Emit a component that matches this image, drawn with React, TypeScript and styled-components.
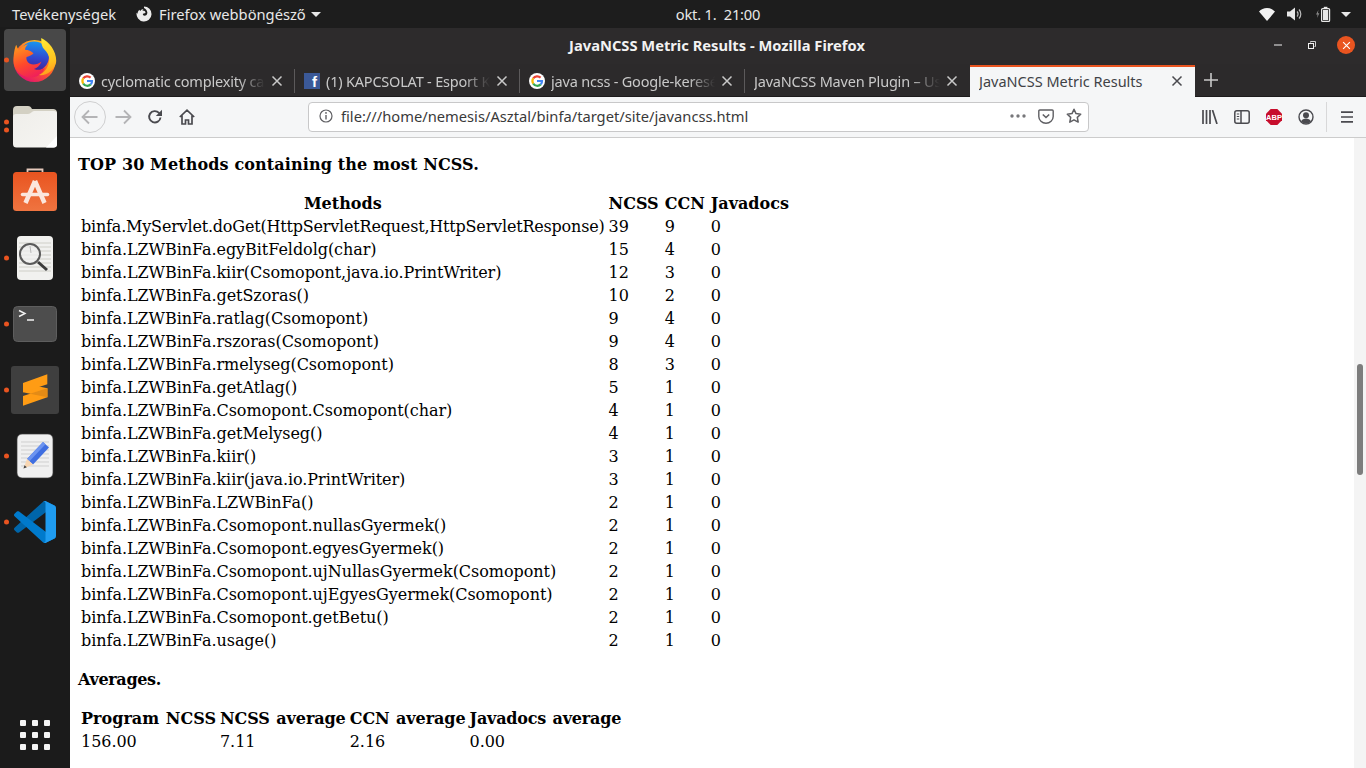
import React from "react";
import styled, { createGlobalStyle } from "styled-components";

const uiFont = `"Noto Sans", "Open Sans", sans-serif`;

const GlobalStyle = createGlobalStyle`
  html, body {
    margin: 0;
    padding: 0;
    height: 100%;
    overflow: hidden;
    background: #1b1b1b;
  }
`;

const Desktop = styled.div`
  width: 1366px;
  height: 768px;
  display: grid;
  grid-template-rows: 28px 1fr;
  grid-template-columns: 70px 1fr;
  overflow: hidden;
  font-family: ${uiFont};
`;

const TopBar = styled.header`
  grid-column: 1 / 3;
  display: grid;
  grid-template-columns: 1fr auto 1fr;
  align-items: center;
  background: #1d1d1d;
  color: #e8e8e8;
  font-size: 14.7px;
`;

const TopLeft = styled.div`
  display: flex;
  align-items: center;
  padding-left: 12px;
`;

const AppMenu = styled.div`
  display: flex;
  align-items: center;
  gap: 7px;
  margin-left: 20px;
`;

const Clock = styled.div`
  white-space: pre;
  margin-left: 70px;
  letter-spacing: -0.2px;
`;

const TopRight = styled.div`
  display: flex;
  align-items: center;
  justify-content: flex-end;
  padding-right: 11px;
`;

const Tray = styled.span<{ $w: number }>`
  display: flex;
  justify-content: center;
  width: ${(p) => p.$w}px;
`;

const Caret = styled.span<{ $nudge?: number }>`
  display: inline-block;
  width: 0;
  height: 0;
  margin-left: ${(p) => p.$nudge ?? 0}px;
  border-left: 5px solid transparent;
  border-right: 5px solid transparent;
  border-top: 5px solid #e8e8e8;
`;

const Dock = styled.nav`
  display: flex;
  flex-direction: column;
  margin-top: -1px;
  background: #1b1b1b;
  padding-bottom: 10px;
`;

const DockItem = styled.div<{ $active?: boolean; $lift?: number }>`
  position: relative;
  height: 66px;
  flex: none;
  box-sizing: border-box;
  padding-bottom: ${(p) => p.$lift ?? 0}px;
  display: flex;
  align-items: center;
  justify-content: center;

  &::before {
    content: "";
    display: ${(p) => (p.$active ? "block" : "none")};
    position: absolute;
    left: 4px;
    right: 4px;
    top: 2px;
    bottom: 2px;
    border-radius: 4px;
    background: #484848;
  }

  svg {
    position: relative;
  }
`;

const DockDots = styled.span`
  position: absolute;
  left: 4px;
  top: 50%;
  transform: translateY(-50%);
  display: flex;
  flex-direction: column;
  gap: 3px;
`;

const Dot = styled.i`
  display: block;
  width: 5px;
  height: 5px;
  border-radius: 50%;
  background: #e95420;
`;

const AppsGrid = styled.div`
  margin: auto 0 8px 20px;
  display: grid;
  grid-template-columns: repeat(3, 6px);
  gap: 6px;
`;

const AppsDot = styled.i`
  display: block;
  width: 6px;
  height: 6px;
  border-radius: 1px;
  background: #f4f4f4;
`;

const Browser = styled.main`
  display: flex;
  flex-direction: column;
  min-width: 0;
  min-height: 0;
`;

const TitleBar = styled.div`
  height: 36px;
  flex: none;
  box-sizing: border-box;
  display: flex;
  align-items: center;
  justify-content: center;
  position: relative;
  background: #2d2b2c;
  color: #f2f2f2;
  font-size: 14.7px;
  font-weight: 700;
  padding: 0 2px 2px 0;
`;

const WindowButtons = styled.div`
  position: absolute;
  right: 11px;
  top: 8px;
  display: flex;
  align-items: center;
  gap: 16px;
`;

const WinBtn = styled.span`
  width: 18px;
  height: 18px;
  display: flex;
  align-items: center;
  justify-content: center;
`;

const CloseBtn = styled(WinBtn)`
  border-radius: 50%;
  background: #e95420;
`;

const TabStrip = styled.div`
  height: 33px;
  flex: none;
  box-sizing: border-box;
  display: flex;
  align-items: stretch;
  background: #2c2a2b;
  border-bottom: 1px solid #1d1b1c;
`;

const Tab = styled.div<{ $active?: boolean; $sep?: boolean }>`
  width: 225px;
  flex: none;
  box-sizing: border-box;
  display: flex;
  align-items: center;
  padding: 0 12px 2px 9px;
  margin: 1px 0 -1px;
  font-size: 14.5px;
  color: ${(p) => (p.$active ? "#3f4246" : "#c9c9c9")};
  background: ${(p) => (p.$active ? "#f5f6f7" : "transparent")};
  border-top: 2px solid ${(p) => (p.$active ? "#e95420" : "transparent")};
  position: relative;

  &::after {
    content: "";
    display: ${(p) => (p.$sep ? "block" : "none")};
    position: absolute;
    right: 0;
    top: 2px;
    bottom: 4px;
    width: 1px;
    background: #5c5a5b;
  }
`;

const TabIcon = styled.span`
  width: 16px;
  height: 16px;
  flex: none;
  margin-right: 6px;
  display: flex;
`;

const FacebookMark = styled.span`
  width: 16px;
  height: 16px;
  background: #3b5998;
  color: #fff;
  font: 700 15px/16px "Liberation Sans", sans-serif;
  text-align: right;
  padding: 1px 3px 0 0;
  box-sizing: border-box;
`;

const TabTitle = styled.span<{ $fade?: boolean }>`
  flex: 1;
  min-width: 0;
  overflow: hidden;
  white-space: nowrap;
  letter-spacing: ${(p) => (p.$fade ? "-0.2px" : "0")};
  mask-image: ${(p) =>
    p.$fade ? "linear-gradient(to right, #000 84%, transparent 100%)" : "none"};
`;

const TabClose = styled.span`
  flex: none;
  width: 12px;
  height: 12px;
  margin-left: 6px;
  display: flex;
`;

const NewTab = styled.span`
  width: 32px;
  display: flex;
  align-items: center;
  justify-content: center;
`;

const NavBar = styled.div`
  height: 41px;
  flex: none;
  box-sizing: border-box;
  display: flex;
  align-items: center;
  background: #f5f6f7;
  border-bottom: 1px solid #cccccc;
  padding: 0 0 1px 4px;
`;

const BackButton = styled.span`
  width: 32px;
  height: 32px;
  box-sizing: border-box;
  flex: none;
  border: 1px solid #cfcfd0;
  border-radius: 50%;
  display: flex;
  align-items: center;
  justify-content: center;
`;

const NavButton = styled.span<{ $w: number }>`
  width: ${(p) => p.$w}px;
  flex: none;
  display: flex;
  align-items: center;
  justify-content: center;
`;

const UrlBar = styled.div`
  width: 781px;
  height: 30px;
  flex: none;
  margin-left: 104px;
  box-sizing: border-box;
  display: flex;
  align-items: center;
  background: #fff;
  border: 1px solid #c8c8c9;
  border-radius: 4px;
  padding: 0 1px 1px 10px;
  font-size: 14.7px;
  color: #3a3a3a;
`;

const UrlText = styled.span`
  flex: 1;
  margin-left: 8px;
  white-space: nowrap;
`;

const UrlAction = styled.span<{ $w: number }>`
  width: ${(p) => p.$w}px;
  display: flex;
  justify-content: center;
`;

const NavRight = styled.div`
  display: flex;
  align-items: center;
  margin-left: 105px;
`;

const NavDivider = styled.span`
  width: 1px;
  height: 30px;
  background: #d8d8d9;
  margin: 0 4px 0 4px;
`;

const PageArea = styled.div`
  flex: 1;
  min-height: 0;
  display: flex;
  background: #fff;
`;

const PageBody = styled.div`
  flex: 1;
  min-width: 0;
  padding: 17px 8px 0;
  color: #000;
  font-family: "DejaVu Serif", serif;
  font-size: 16px;
`;

const SectionTitle = styled.h3<{ $spacing: number }>`
  margin: 0 0 17px;
  font-size: 16px;
  font-weight: 700;
  letter-spacing: ${(p) => p.$spacing}px;
`;

const MetricTable = styled.table`
  margin-bottom: 17px;
  border-spacing: 2px;

  th, td {
    padding: 1px;
    white-space: nowrap;
  }

  td {
    text-align: left;
    letter-spacing: -0.05px;
  }
`;

const MethodsTable = styled(MetricTable)`
  th:nth-child(2), th:nth-child(3) {
    padding-right: 3px;
  }

  tbody tr:first-child td:first-child {
    letter-spacing: -0.19px;
  }
`;

const AveragesTable = styled(MetricTable)`
  th {
    word-spacing: 1px;
    letter-spacing: -0.08px;
  }

  th:first-child {
    letter-spacing: 0.02px;
  }

  th:last-child {
    letter-spacing: -0.2px;
  }
`;

const ScrollTrack = styled.div`
  width: 12px;
  flex: none;
  background: #f4f4f4;
  display: flex;
  justify-content: center;
`;

const ScrollThumb = styled.div`
  width: 6px;
  height: 111px;
  margin-top: 226px;
  border-radius: 3px;
  background: #7d7d7d;
`;

const GoogleIcon = () => (
  <svg width="16" height="16" viewBox="0 0 16 16">
    <circle cx="8" cy="8" r="8" fill="#fff" />
    <g fill="none" strokeWidth="2.2">
      <path d="M11.6 4.6A5 5 0 0 0 4.2 5.4" stroke="#ea4335" />
      <path d="M4.2 5.4a5 5 0 0 0 0 5.2" stroke="#fbbc05" />
      <path d="M4.2 10.6a5 5 0 0 0 7.6.8" stroke="#34a853" />
      <path d="M11.8 11.4A5 5 0 0 0 13 8H8" stroke="#4285f4" />
    </g>
  </svg>
);

const CrossIcon = ({ color, size = 12 }: { color: string; size?: number }) => (
  <svg width={size} height={size} viewBox="0 0 12 12">
    <path d="M1.5 1.5l9 9M10.5 1.5l-9 9" stroke={color} strokeWidth="1.5" fill="none" />
  </svg>
);

const FirefoxMini = () => (
  <svg width="16" height="16" viewBox="0 0 16 16">
    <path
      d="M8 .5a7.5 7.5 0 1 1-7.4 6.3c.3.5.6.8 1 1 0-1.8.7-3 2-4 0 .6.2 1 .6 1.3C5.2 3.5 6.5 2.8 7.6 3 6.8 3.5 6.5 4 6.5 4.5c1.8.2 3 .8 3 2 0 .7-1.5 1-2.5 1.3-.4.9.2 2 1.5 2 1.8 0 3-1.5 2.8-3.5-.2-2-1.6-3.6-3.3-4.3V.5z"
      fill="#ececec"
    />
  </svg>
);

const WifiIcon = () => (
  <svg width="16" height="13" viewBox="0 0 16 13">
    <path d="M8 13L0 3.6C2 1.4 4.8 0 8 0s6 1.4 8 3.6z" fill="#f2f2f2" />
  </svg>
);

const SpeakerIcon = () => (
  <svg width="16" height="14" viewBox="0 0 16 14">
    <path d="M0 4.5h3L8 .5v13l-5-4H0z" fill="#e8e8e8" />
    <path d="M10 4.5a3.5 3.5 0 0 1 0 5M12 2.5a6.5 6.5 0 0 1 0 9" stroke="#bdbdbd" strokeWidth="1.2" fill="none" />
  </svg>
);

const BatteryIcon = () => (
  <svg width="16" height="16" viewBox="0 0 16 16">
    <path d="M3.4 4L1 8.5h1.6L2 12l2.4-4.8H2.9z" fill="#8a8a8a" />
    <rect x="6.6" y="2.6" width="8" height="12.8" rx="1" fill="none" stroke="#e8e8e8" strokeWidth="1.2" />
    <rect x="8.8" y=".8" width="3.6" height="1.6" fill="#e8e8e8" />
    <rect x="8" y="4" width="5.2" height="10" fill="#e8e8e8" />
  </svg>
);

const FirefoxLogo = () => (
  <svg width="44" height="44" viewBox="0 0 44 44">
    <defs>
      <linearGradient id="foxRing" x1="0.8" y1="0.2" x2="0.3" y2="1">
        <stop offset="0" stopColor="#ffb21f" />
        <stop offset="0.5" stopColor="#ff5a2a" />
        <stop offset="1" stopColor="#e3126f" />
      </linearGradient>
      <linearGradient id="foxGlobe" x1="0.6" y1="0" x2="0.5" y2="1">
        <stop offset="0" stopColor="#1796f0" />
        <stop offset="0.55" stopColor="#3347cf" />
        <stop offset="1" stopColor="#45218f" />
      </linearGradient>
      <linearGradient id="foxHead" x1="0.2" y1="0" x2="0.6" y2="1">
        <stop offset="0" stopColor="#ff9a1c" />
        <stop offset="0.55" stopColor="#ff4a2a" />
        <stop offset="1" stopColor="#f0205a" />
      </linearGradient>
      <linearGradient id="foxTail" x1="0.3" y1="0" x2="0.5" y2="1">
        <stop offset="0" stopColor="#ffe933" />
        <stop offset="0.7" stopColor="#ffc21f" />
        <stop offset="1" stopColor="#ff9a1f" />
      </linearGradient>
    </defs>
    <circle cx="21.5" cy="23" r="21" fill="url(#foxRing)" />
    <circle cx="21" cy="18.5" r="15" fill="url(#foxGlobe)" />
    <path
      d="M3.3 6.7c.5 2.3 1.5 4 2.7 5.3C8.5 9 11.5 7 15 6.2 13 8 12 10 12 11.7c3 0 7 1.3 8.5 3.8-2 2-5 3-7 3.5-.5 2 .5 5 3 6.5 3.5 2 8.5 1 12-2-1.5 4-4.500 6.500-7.500 7.500 4 1.500 8 1 11-1.500-2.500 6.500-8 10.500-15 10C8 38.500 0 32 .5 22c.2-6 1-12 2.8-15.3z"
      fill="url(#foxHead)"
    />
    <path
      d="M28.3 0C28 5 29 9 31 11c4 4 6 8 5 13-1 6-5 11-10 13 7 1 15-4 17-12C44.5 15 37 4 28.3 0z"
      fill="url(#foxTail)"
    />
  </svg>
);

const FilesLogo = () => (
  <svg width="46" height="44" viewBox="0 0 46 44">
    <defs>
      <linearGradient id="folderFace" x1="0" y1="0" x2="1" y2="1">
        <stop offset="0" stopColor="#efeeea" />
        <stop offset="1" stopColor="#f6f5f2" />
      </linearGradient>
    </defs>
    <path d="M1 6a4 4 0 0 1 4-4h11c2 0 3 1 4 3h21a4 4 0 0 1 4 3v8H1z" fill="#d3d0c3" />
    <path d="M1 13a3 3 0 0 1 3-3h12c3 0 4-3 6-3h20a3 3 0 0 1 3 3v30a3.5 3.5 0 0 1-3.5 3.5h-37A3.5 3.5 0 0 1 1 40z" fill="url(#folderFace)" />
    <path d="M45 32v8a3.5 3.5 0 0 1-3.5 3.5H34z" fill="#fff" />
  </svg>
);

const StoreLogo = () => (
  <svg width="46" height="44" viewBox="0 0 46 44">
    <defs>
      <linearGradient id="storeBag" x1="0.5" y1="0" x2="0.5" y2="1">
        <stop offset="0" stopColor="#e95420" />
        <stop offset="1" stopColor="#ef7440" />
      </linearGradient>
    </defs>
    <path d="M15.5 5V1.5h15V5" fill="none" stroke="#e6c9bb" strokeWidth="1.8" />
    <rect x="1" y="4" width="44" height="39" rx="3.5" fill="url(#storeBag)" />
    <g stroke="#fbe6dc" fill="none">
      <path d="M23 13L13.5 35M23 13l9.5 22" strokeWidth="4.5" />
      <path d="M10.5 26.5h25" strokeWidth="3.5" strokeLinecap="round" />
    </g>
  </svg>
);

const SearchLogo = () => (
  <svg width="38" height="46" viewBox="0 0 38 46">
    <rect x="1" y="1" width="36" height="44" rx="4" fill="#f1f1ef" />
    <g stroke="#cfcfc8" strokeWidth="1">
      {[8, 12, 16, 20, 24, 28, 32, 36].map((y) => (
        <path key={y} d={`M3 ${y}h32`} />
      ))}
    </g>
    <circle cx="14" cy="19" r="10" fill="#efefef" fillOpacity=".7" stroke="#5a5a5a" strokeWidth="2" />
    <path d="M14 11l1 7" stroke="#b9b9b9" strokeWidth="1" />
    <path d="M22 27l9 8" stroke="#3c3c3c" strokeWidth="3" />
  </svg>
);

const TerminalLogo = () => (
  <svg width="44" height="36" viewBox="0 0 44 36">
    <rect x=".5" y=".5" width="43" height="35" rx="4" fill="#4d4d4d" stroke="#5e5e5e" />
    <path d="M6 4.5l6 3-6 3M14 14h7" fill="none" stroke="#f2f2f2" strokeWidth="1.4" />
  </svg>
);

const SublimeLogo = () => (
  <svg width="48" height="48" viewBox="0 0 48 48">
    <rect width="48" height="48" rx="3" fill="#3f3f3f" />
    <path d="M12 17L36.3 22.3v9L12 26.3z" fill="#ff9c14" />
    <path d="M12 17L36.3 8.3v10L12 26.3z" fill="#ff9c14" />
    <path d="M12 30l24.3-7.7v9L12 39.7z" fill="#ff9c14" />
    <path d="M19 27.8l17.3-5.5v9z" fill="#e38b16" />
  </svg>
);

const EditorLogo = () => (
  <svg width="38" height="46" viewBox="0 0 38 46">
    <rect x="1" y="1" width="36" height="44" rx="5" fill="#f0f0f0" stroke="#3a3a3a" strokeWidth=".7" />
    <g stroke="#cfcfcf" strokeWidth="1">
      {[9, 13, 17, 21, 25, 29, 33].map((y) => (
        <path key={y} d={`M5 ${y}h28`} />
      ))}
    </g>
    <path d="M11 26L27 9l6 5.5-16 17z" fill="#3f6ee0" />
    <path d="M11 26L27 9l2.5 2.3L13.5 28.3z" fill="#6c94f0" />
    <path d="M11 26l6 5.5-9.5 4z" fill="#f8d6b2" />
    <path d="M7.5 35.5l1-3.3 2.4 2z" fill="#444" />
  </svg>
);

const VsCodeLogo = () => (
  <svg width="42" height="42" viewBox="0 0 100 100">
    <path
      d="M96.4614 10.7962L75.8569 0.875542C73.4719 -0.272773 70.6217 0.211611 68.75 2.08333L1.29858 63.5832C-0.515693 65.2373 -0.513607 68.0937 1.30308 69.7452L6.81272 74.754C8.29793 76.1042 10.5347 76.2036 12.1338 74.9905L93.3609 13.3699C96.086 11.3026 100 13.2462 100 16.6667V16.4275C100 14.0265 98.6246 11.8378 96.4614 10.7962Z"
      fill="#0065A9"
    />
    <path
      d="M96.4614 89.2038L75.8569 99.1245C73.4719 100.273 70.6217 99.7884 68.75 97.9167L1.29858 36.4169C-0.515693 34.7627 -0.513607 31.9063 1.30308 30.2548L6.81272 25.246C8.29793 23.8958 10.5347 23.7964 12.1338 25.0095L93.3609 86.6301C96.086 88.6974 100 86.7538 100 83.3334V83.5726C100 85.9735 98.6246 88.1622 96.4614 89.2038Z"
      fill="#007ACC"
    />
    <path
      d="M75.8578 99.1263C73.4721 100.274 70.6219 99.7885 68.75 97.9166C71.0564 100.223 75 98.5895 75 95.3278V4.67213C75 1.41039 71.0564 -0.223106 68.75 2.08329C70.6219 0.211402 73.4721 -0.27388 75.8578 0.873734L96.4587 10.7807C98.6234 11.8217 100 14.0112 100 16.4132V83.5871C100 85.9891 98.6234 88.1786 96.4586 89.2196L75.8578 99.1263Z"
      fill="#1F9CF0"
    />
  </svg>
);

const ArrowSvg = styled.svg<{ $flip?: boolean }>`
  transform: ${(p) => (p.$flip ? "scaleX(-1)" : "none")};
`;

const Arrow = ({ flip, color }: { flip?: boolean; color: string }) => (
  <ArrowSvg $flip={flip} width="18" height="16" viewBox="0 0 18 16">
    <path d="M1.5 8h15M8 1.5L1.5 8 8 14.5" fill="none" stroke={color} strokeWidth="1.8" />
  </ArrowSvg>
);

const ReloadIcon = () => (
  <svg width="16" height="16" viewBox="0 0 16 16">
    <path d="M13.5 8.5A5.7 5.7 0 1 1 12 3.9L14.5 6" fill="none" stroke="#4a4a4f" strokeWidth="1.9" />
    <path d="M15 .8V7H8.8z" fill="#4a4a4f" />
  </svg>
);

const HomeIcon = () => (
  <svg width="16" height="16" viewBox="0 0 16 16">
    <path d="M.8 8L8 1.2 15.2 8M3 6.5V15h3.5v-4h3v4H13V6.5" fill="none" stroke="#4a4a4f" strokeWidth="1.7" />
  </svg>
);

const InfoIcon = () => (
  <svg width="14" height="14" viewBox="0 0 14 14">
    <circle cx="7" cy="7" r="6" fill="none" stroke="#5f5f63" strokeWidth="1.2" />
    <path d="M7 6v4.5" stroke="#5f5f63" strokeWidth="1.4" />
    <circle cx="7" cy="3.9" r=".9" fill="#5f5f63" />
  </svg>
);

const MoreIcon = () => (
  <svg width="16" height="4" viewBox="0 0 16 4">
    <circle cx="2" cy="2" r="1.7" fill="#77777a" />
    <circle cx="8" cy="2" r="1.7" fill="#77777a" />
    <circle cx="14" cy="2" r="1.7" fill="#77777a" />
  </svg>
);

const PocketIcon = () => (
  <svg width="16" height="15" viewBox="0 0 16 15">
    <path d="M1.8 1h12.4a1 1 0 0 1 1 1v5.5a7.2 6.8 0 0 1-14.4 0V2a1 1 0 0 1 1-1z" fill="none" stroke="#5f5f63" strokeWidth="1.4" />
    <path d="M4.8 5.5L8 8.5l3.2-3" fill="none" stroke="#5f5f63" strokeWidth="1.6" />
  </svg>
);

const StarIcon = () => (
  <svg width="16" height="16" viewBox="0 0 16 16">
    <path d="M8 1.3l2 4.3 4.7.6-3.4 3.2.9 4.7L8 11.8l-4.2 2.3.9-4.7L1.3 6.2 6 5.6z" fill="none" stroke="#5f5f63" strokeWidth="1.5" strokeLinejoin="round" />
  </svg>
);

const LibraryIcon = () => (
  <svg width="16" height="14" viewBox="0 0 16 14">
    <path d="M1 0v14M4.5 0v14M8 0v14M10.5 0l4.5 14" fill="none" stroke="#4a4a4f" strokeWidth="1.7" />
  </svg>
);

const SidebarIcon = () => (
  <svg width="16" height="14" viewBox="0 0 16 14">
    <rect x=".8" y=".8" width="14.4" height="12.4" rx="2" fill="none" stroke="#4a4a4f" strokeWidth="1.5" />
    <path d="M7 1v12" stroke="#4a4a4f" strokeWidth="1.5" />
    <path d="M2.8 4h2.4M2.8 6.5h2.4M2.8 9h2.4" stroke="#4a4a4f" strokeWidth="1.1" />
  </svg>
);

const AbpBadge = () => (
  <svg width="16" height="16" viewBox="0 0 16 16">
    <path d="M4.7 0h6.6L16 4.7v6.6L11.3 16H4.7L0 11.3V4.7z" fill="#c70d2c" />
    <text x="8" y="10.8" textAnchor="middle" fontFamily="Liberation Sans, sans-serif" fontWeight="700" fontSize="7.5" fill="#fff">
      ABP
    </text>
  </svg>
);

const AccountIcon = () => (
  <svg width="16" height="16" viewBox="0 0 16 16">
    <circle cx="8" cy="8" r="7" fill="none" stroke="#4a4a4f" strokeWidth="1.4" />
    <circle cx="8" cy="6.3" r="3" fill="#4a4a4f" />
    <path d="M3 12.5c1-2.2 3-3 5-3s4 .8 5 3c-1.3 1.2-3 2-5 2s-3.700-.8-5-2z" fill="#4a4a4f" />
  </svg>
);

const MenuIcon = () => (
  <svg width="14" height="12" viewBox="0 0 14 12">
    <path d="M1 1.1h12M1 6h12M1 10.9h12" stroke="#4a4a4f" strokeWidth="1.7" />
  </svg>
);

const dockApps = [
  { logo: <FirefoxLogo />, dots: 1, active: true },
  { logo: <FilesLogo />, dots: 2 },
  { logo: <StoreLogo />, dots: 0, lift: 4 },
  { logo: <SearchLogo />, dots: 1 },
  { logo: <TerminalLogo />, dots: 1 },
  { logo: <SublimeLogo />, dots: 1 },
  { logo: <EditorLogo />, dots: 1 },
  { logo: <VsCodeLogo />, dots: 1 },
];

const tabs = [
  { title: "cyclomatic complexity calculator", icon: <GoogleIcon /> },
  { title: "(1) KAPCSOLAT - Esport Klub", icon: <FacebookMark>f</FacebookMark> },
  { title: "java ncss - Google-keresés", icon: <GoogleIcon /> },
  { title: "JavaNCSS Maven Plugin – Usage", icon: null },
];

const methods: [string, number, number][] = [
  ["binfa.MyServlet.doGet(HttpServletRequest,HttpServletResponse)", 39, 9],
  ["binfa.LZWBinFa.egyBitFeldolg(char)", 15, 4],
  ["binfa.LZWBinFa.kiir(Csomopont,java.io.PrintWriter)", 12, 3],
  ["binfa.LZWBinFa.getSzoras()", 10, 2],
  ["binfa.LZWBinFa.ratlag(Csomopont)", 9, 4],
  ["binfa.LZWBinFa.rszoras(Csomopont)", 9, 4],
  ["binfa.LZWBinFa.rmelyseg(Csomopont)", 8, 3],
  ["binfa.LZWBinFa.getAtlag()", 5, 1],
  ["binfa.LZWBinFa.Csomopont.Csomopont(char)", 4, 1],
  ["binfa.LZWBinFa.getMelyseg()", 4, 1],
  ["binfa.LZWBinFa.kiir()", 3, 1],
  ["binfa.LZWBinFa.kiir(java.io.PrintWriter)", 3, 1],
  ["binfa.LZWBinFa.LZWBinFa()", 2, 1],
  ["binfa.LZWBinFa.Csomopont.nullasGyermek()", 2, 1],
  ["binfa.LZWBinFa.Csomopont.egyesGyermek()", 2, 1],
  ["binfa.LZWBinFa.Csomopont.ujNullasGyermek(Csomopont)", 2, 1],
  ["binfa.LZWBinFa.Csomopont.ujEgyesGyermek(Csomopont)", 2, 1],
  ["binfa.LZWBinFa.Csomopont.getBetu()", 2, 1],
  ["binfa.LZWBinFa.usage()", 2, 1],
];

export default function App() {
  return (
    <Desktop>
      <GlobalStyle />
      <TopBar>
        <TopLeft>
          <span>Tevékenységek</span>
          <AppMenu>
            <FirefoxMini />
            <span>Firefox webböngésző</span>
            <Caret $nudge={-2} />
          </AppMenu>
        </TopLeft>
        <Clock>okt. 1.  21:00</Clock>
        <TopRight>
          <Tray $w={28}><WifiIcon /></Tray>
          <Tray $w={28}><SpeakerIcon /></Tray>
          <Tray $w={28}><BatteryIcon /></Tray>
          <Tray $w={18}><Caret /></Tray>
        </TopRight>
      </TopBar>

      <Dock>
        {dockApps.map((app, i) => (
          <DockItem key={i} $active={app.active} $lift={app.lift}>
            {app.logo}
            {app.dots > 0 && (
              <DockDots>
                {Array.from({ length: app.dots }).map((_, d) => (
                  <Dot key={d} />
                ))}
              </DockDots>
            )}
          </DockItem>
        ))}
        <AppsGrid>
          {Array.from({ length: 9 }).map((_, i) => (
            <AppsDot key={i} />
          ))}
        </AppsGrid>
      </Dock>

      <Browser>
        <TitleBar>
          JavaNCSS Metric Results - Mozilla Firefox
          <WindowButtons>
            <WinBtn>
              <svg width="8" height="2" viewBox="0 0 8 2"><path d="M0 1h8" stroke="#f2f2f2" strokeWidth="1" /></svg>
            </WinBtn>
            <WinBtn>
              <svg width="8" height="8" viewBox="0 0 8 8">
                <path d="M2.5 1.5V.5h5v5h-1" fill="none" stroke="#d0d0d0" strokeWidth="1" />
                <rect x=".5" y="2.5" width="5" height="5" fill="none" stroke="#f2f2f2" strokeWidth="1" />
              </svg>
            </WinBtn>
            <CloseBtn><CrossIcon color="#fff" size={9} /></CloseBtn>
          </WindowButtons>
        </TitleBar>

        <TabStrip>
          {tabs.map((tab, i) => (
            <Tab key={i} $sep={i < 3}>
              {tab.icon && <TabIcon>{tab.icon}</TabIcon>}
              <TabTitle $fade>{tab.title}</TabTitle>
              <TabClose><CrossIcon color="#c9c9c9" /></TabClose>
            </Tab>
          ))}
          <Tab $active>
            <TabTitle>JavaNCSS Metric Results</TabTitle>
            <TabClose><CrossIcon color="#4a4a4f" /></TabClose>
          </Tab>
          <NewTab>
            <svg width="14" height="14" viewBox="0 0 14 14">
              <path d="M7 0v14M0 7h14" stroke="#c9c9c9" strokeWidth="1.6" />
            </svg>
          </NewTab>
        </TabStrip>

        <NavBar>
          <BackButton><Arrow color="#b4b4b6" /></BackButton>
          <NavButton $w={34}><Arrow flip color="#b4b4b6" /></NavButton>
          <NavButton $w={30}><ReloadIcon /></NavButton>
          <NavButton $w={34}><HomeIcon /></NavButton>
          <UrlBar>
            <InfoIcon />
            <UrlText>file:///home/nemesis/Asztal/binfa/target/site/javancss.html</UrlText>
            <UrlAction $w={26}><MoreIcon /></UrlAction>
            <UrlAction $w={30}><PocketIcon /></UrlAction>
            <UrlAction $w={26}><StarIcon /></UrlAction>
          </UrlBar>
          <NavRight>
            <NavButton $w={32}><LibraryIcon /></NavButton>
            <NavButton $w={32}><SidebarIcon /></NavButton>
            <NavButton $w={32}><AbpBadge /></NavButton>
            <NavButton $w={32}><AccountIcon /></NavButton>
            <NavDivider />
            <NavButton $w={32}><MenuIcon /></NavButton>
          </NavRight>
        </NavBar>

        <PageArea>
          <PageBody>
            <SectionTitle $spacing={0.12}>TOP 30 Methods containing the most NCSS.</SectionTitle>
            <MethodsTable>
              <thead>
                <tr>
                  <th>Methods</th>
                  <th>NCSS</th>
                  <th>CCN</th>
                  <th>Javadocs</th>
                </tr>
              </thead>
              <tbody>
                {methods.map(([name, ncss, ccn]) => (
                  <tr key={name}>
                    <td>{name}</td>
                    <td>{ncss}</td>
                    <td>{ccn}</td>
                    <td>0</td>
                  </tr>
                ))}
              </tbody>
            </MethodsTable>
            <SectionTitle $spacing={-0.33}>Averages.</SectionTitle>
            <AveragesTable>
              <thead>
                <tr>
                  <th>Program NCSS</th>
                  <th>NCSS average</th>
                  <th>CCN average</th>
                  <th>Javadocs average</th>
                </tr>
              </thead>
              <tbody>
                <tr>
                  <td>156.00</td>
                  <td>7.11</td>
                  <td>2.16</td>
                  <td>0.00</td>
                </tr>
              </tbody>
            </AveragesTable>
          </PageBody>
          <ScrollTrack>
            <ScrollThumb />
          </ScrollTrack>
        </PageArea>
      </Browser>
    </Desktop>
  );
}
